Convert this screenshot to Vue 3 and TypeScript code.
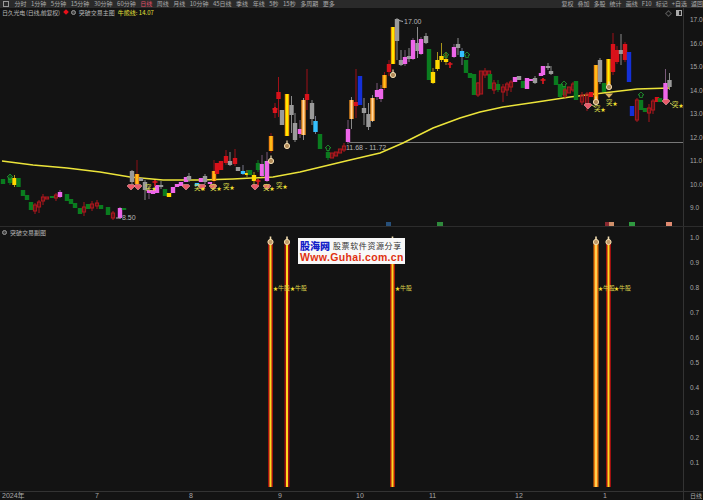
<template>
  <div class="page">
    <div class="toolbar">
      <div class="tool-group">
        <span class="tool-box"></span>
        <span v-for="t in periods" :key="t" class="tool" :class="{ active: t === '日线' }">{{ t }}</span>
      </div>
      <div class="tool-group right">
        <span v-for="t in actions" :key="t" class="tool">{{ t }}</span>
      </div>
    </div>

    <div class="panel main-panel">
      <div class="chart">
        <div class="legend">
          <span class="legend-name">日久光电 (日线,前复权)</span>
          <i class="red-diamond"></i>
          <i class="gray-dot"></i>
          <span>突破交易主图</span>
          <span class="yellow">牛熊线: 14.07</span>
        </div>
        <div class="corner-icons"><i class="ci-diamond"></i><i class="ci-square"></i></div>
        <svg class="plot" width="683" height="218" viewBox="0 8 683 218">
          <line x1="349" y1="142.5" x2="683" y2="142.5" stroke="#777" />
          <polyline :points="maLine" fill="none" stroke="#ece43a" stroke-width="1.5" />

          <g v-for="(c, i) in candleViews" :key="i">
            <line :x1="c.x" :x2="c.x" :y1="c.wt" :y2="c.wb" :stroke="c.wick" />
            <rect :x="c.x - c.w / 2" :y="c.t" :width="c.w" :height="c.h" :fill="c.fill" :stroke="c.stroke" stroke-width="1" />
            <rect v-if="c.inner" :x="c.x - 0.9" :y="c.t" width="1.8" :height="c.h" :fill="c.inner" />
          </g>

          <g v-for="g in gems" :key="'g' + g[0]">
            <path :d="`M${g[0] - 4} ${g[1] - 1}l1.5 -1.5h5l1.5 1.5l-4 4z`" fill="#e85a6a" stroke="#ffb4b4" stroke-width=".5" />
          </g>
          <g v-for="b in bulbs" :key="'b' + b[0]">
            <circle :cx="b[0]" :cy="b[1]" r="2.6" fill="#b08a58" stroke="#f2dcb0" stroke-width="1" />
            <path :d="`M${b[0]} ${b[1] - 5.5}v3`" stroke="#f2dcb0" stroke-width="1.2" />
          </g>
          <g v-for="u in ups" :key="'u' + u[0]">
            <path :d="`M${u[0]} ${u[1] - 3}l3 3h-1.6v2.5h-2.8v-2.5h-1.6z`" fill="none" stroke="#1f9a30" stroke-width=".8" />
          </g>
          <g v-for="r in crosses" :key="'r' + r[0]">
            <path :d="`M${r[0]} ${r[1] - 3}v6M${r[0] - 2.5} ${r[1] - 1}h5`" stroke="#e01820" stroke-width="1.6" />
          </g>
          <path d="M605 93.5h8l-4 4.5z" fill="#d8b060" />
          <path d="M592 105l3 2M670 103l3 2" stroke="#c8c860" fill="none" />

          <g v-for="s in breaks" :key="'s' + s[0]">
            <text class="cn-mark" :x="s[0]" :y="s[1]">突</text>
            <text class="star" :x="s[0] + 6.5" :y="s[1]">★</text>
          </g>

          <text class="price" x="404" y="23.5">17.00</text>
          <path d="M399 20.5l4 1" stroke="#aaa" fill="none" />
          <text class="price" x="122" y="219.5">8.50</text>
          <path d="M116 218h5" stroke="#aaa" />
          <text class="price" x="346" y="150">11.68 - 11.72</text>

          <rect x="386" y="222" width="5" height="4" fill="#27507a" />
          <rect x="437" y="222" width="6" height="4" fill="#2f8a3c" />
          <rect x="605" y="222" width="4" height="4" fill="#8a2830" />
          <rect x="609" y="222" width="5" height="4" fill="#d0906a" />
          <rect x="629" y="222" width="6" height="4" fill="#2f9a40" />
          <rect x="666" y="222" width="6" height="4" fill="#e08a70" />
        </svg>
      </div>
      <div class="axis">
        <span v-for="t in mainTicks" :key="t" class="tick">{{ t }}</span>
      </div>
    </div>

    <div class="panel sub-panel">
      <div class="chart">
        <div class="legend sub-legend">
          <i class="gray-dot"></i>
          <span>突破交易副图</span>
        </div>
        <svg class="plot" width="683" height="264" viewBox="0 227 683 264">
          <g v-for="b in signals" :key="b.x">
            <rect :x="b.x - 2.5" y="241" width="5" height="246" :fill="b.edge" />
            <rect :x="b.x - 1" y="241" width="2" height="246" :fill="b.core" />
            <circle :cx="b.x" cy="242" r="2.6" fill="#c09a68" stroke="#f2dcb0" stroke-width="1" />
            <path :d="`M${b.x} 236.5v3.5`" stroke="#f2dcb0" stroke-width="1.6" />
          </g>
          <g v-for="x in bullX" :key="x">
            <text class="star" :x="x" y="289.5">★</text>
            <text class="bull" :x="x + 5" y="289.5">牛股</text>
          </g>
        </svg>
        <div class="stamp">
          <div class="stamp-top">
            <b>股海网</b>
            <span>股票软件资源分享</span>
          </div>
          <div class="stamp-url">Www.Guhai.com.cn</div>
        </div>
      </div>
      <div class="axis sub-axis">
        <span v-for="t in subTicks" :key="t" class="tick">{{ t }}</span>
      </div>
    </div>

    <div class="dates">
      <div class="date-track">
        <span v-for="d in dates" :key="d.t" class="date" :style="{ left: d.x + 'px' }">{{ d.t }}</span>
      </div>
      <span class="date-kind">日线</span>
    </div>
  </div>
</template>

<script setup lang="ts">
import { computed } from 'vue'

type Kind = 'g' | 'r' | 'h' | 'm' | 's' | 'y' | 'o' | 'c' | 'b' | 'a' | 'f'
type Candle = [number, number, number, Kind, number?, number?]

const periods = ['分时', '1分钟', '5分钟', '15分钟', '30分钟', '60分钟', '日线', '周线', '月线', '10分钟', '45日线', '季线', '年线', '5秒', '15秒', '多周期', '更多']
const actions = ['复权', '叠加', '多股', '统计', '画线', 'F10', '标记', '+自选', '返回']
const mainTicks = ['17.0', '16.0', '15.0', '14.0', '13.0', '12.0', '11.0', '10.0', '9.0']
const subTicks = ['1.0', '0.9', '0.8', '0.7', '0.6', '0.5', '0.4', '0.3', '0.2', '0.1']
const dates = [
  { t: '2024年', x: 2 }, { t: '7', x: 95 }, { t: '8', x: 189 }, { t: '9', x: 278 },
  { t: '10', x: 356 }, { t: '11', x: 429 }, { t: '12', x: 515 }, { t: '1', x: 603 },
]

// x, body top, body bottom, kind, wick top, wick bottom
const candles: Candle[] = [
  [3, 179, 184, 'g'], [10, 178, 183, 'g', 174, 185], [14.5, 178, 185, 'y', 175, 187], [18.5, 178, 187, 'g'],
  [23, 190, 196, 'g'], [27, 195, 200, 'g'], [31, 202, 210, 'g'], [35, 205, 211, 'h', 203, 214],
  [39, 202, 207, 'h', 200, 213], [43, 197, 201, 'h', 194, 205], [47, 197, 199, 'h'], [52, 196, 198, 'g'],
  [56, 195, 198, 'h', 193, 201], [60, 192, 197, 'm', 190, 198], [67, 194, 201, 'g'], [71, 199, 204, 'g'],
  [75, 203, 208, 'g'], [80, 208, 214, 'g'], [84, 207, 212, 'h', 202, 216], [88, 204, 209, 'g'],
  [92, 204, 208, 'h', 201, 211], [97, 203, 206, 'h', 200, 209], [101, 205, 209, 'g'], [108, 207, 215, 'g'],
  [113, 213, 218, 'h', 211, 220], [120, 208, 218, 'm', 207, 219], [124, 208, 210, 'g'],
  [132, 171, 182, 's', 170, 184], [137, 174, 184, 'o', 160, 188], [141, 178, 181, 's'], [145, 182, 190, 's', 180, 200],
  [149, 190, 193, 'm', 186, 199], [153, 190, 194, 'm'], [157, 185, 193, 'm'], [161, 185, 187, 's', 181, 189],
  [165, 189, 196, 'g'], [169, 193, 197, 'y'], [173, 187, 193, 'm'], [177, 184, 187, 'm'], [181, 182, 186, 'm'],
  [186, 177, 182, 'm'], [189, 176, 180, 's', 173, 182], [197, 183, 186, 'b'], [201, 178, 182, 'm'], [205, 176, 182, 's', 174, 184],
  [210, 182, 184, 'm'], [214, 171, 181, 'o', 160, 184], [217, 163, 174, 'r'], [221, 161, 170, 'r'], [226, 156, 163, 'r', 150, 165],
  [230, 161, 165, 's', 152, 166], [235, 158, 164, 'r', 149, 166], [238, 167, 171, 's'], [243, 171, 174, 'b', 165, 175],
  [247, 173, 175, 'y', 170, 177], [250, 170, 175, 'g'], [254, 175, 181, 'y', 172, 186], [258, 163, 170, 'g', 160, 172],
  [262, 164, 176, 'm', 155, 177], [266, 161, 175, 'g'], [267, 161, 181, 'm', 152, 182], [271, 136, 151, 'o', 133, 153],
  [275, 108, 113, 'r', 103, 118], [278.5, 92, 99, 'r', 77, 117], [282, 110, 125, 's'], [287, 94, 136, 'a'],
  [291.5, 105, 115, 's', 96, 133], [295, 123, 140, 's', 113, 142], [300, 129, 134, 'm', 120, 138], [303.5, 100, 135, 'c', 98, 140],
  [307, 94, 100, 'r', 69, 110], [312, 103, 119, 's', 100, 125], [315.5, 121, 132, 'b', 116, 134], [320, 134, 149, 'g'],
  [328, 152, 158, 'g', 150, 160], [332, 153, 158, 'h'], [336, 152, 156, 'h'], [340, 149, 153, 'h'], [344, 146, 150, 'h', 143, 152],
  [348, 129, 142, 'm', 120, 144], [351.5, 100, 119, 'c', 97, 129], [356, 102, 106, 'r', 69, 118], [360, 76, 105, 'f'],
  [364, 108, 113, 's', 98, 125], [368.5, 114, 127, 's', 103, 130], [372.5, 98, 121, 'c', 95, 122], [377, 90, 97, 'm', 83, 100],
  [381, 89, 99, 'm', 85, 102], [384.5, 75, 88, 'o', 72, 90], [389, 64, 72, 'r', 60, 76], [393, 27, 64, 'a'],
  [397, 19, 41, 's', 18, 60], [401, 60, 65, 's', 50, 66], [405, 57, 64, 'm', 50, 66], [409, 56, 59, 's', 48, 62],
  [413, 40, 59, 'm', 38, 60], [417.5, 43, 51, 's', 27, 58], [421, 39, 54, 'm', 37, 55], [426, 36, 43, 's', 33, 44],
  [429, 49, 80, 'g'], [433, 72, 83, 'y', 68, 84], [437.5, 60, 69, 'y', 52, 71], [441.5, 56, 60, 'y', 43, 62],
  [446, 59, 62, 'y', 52, 65], [454, 47, 57, 'm', 44, 58], [458, 44, 48, 's', 38, 55], [462, 51, 57, 'b', 48, 65],
  [466, 60, 73, 'g'], [470, 73, 78, 'g'], [474, 74, 95, 'g'], [478, 83, 95, 'h', 82, 97], [481, 71, 94, 'h'],
  [485, 71, 75, 'h', 68, 78], [489, 71, 75, 'h'], [490, 74, 89, 'g'], [498, 84, 90, 'g', 80, 92],
  [494, 83, 90, 'h', 80, 94], [503, 87, 92, 'h', 84, 102], [507, 84, 90, 'h', 82, 96], [511, 82, 87, 'h', 80, 92],
  [515, 77, 82, 'm'], [519, 76, 80, 's'], [523, 81, 88, 'g'], [527, 78, 89, 'm'], [531, 79, 81, 'm'], [535, 78, 83, 's', 76, 84],
  [541, 73, 76, 'm'], [543, 66, 75, 'm'], [548, 66, 68, 's', 63, 70], [551, 71, 74, 's', 66, 75], [556, 76, 85, 'g'],
  [560, 84, 97, 'g'], [564, 86, 95, 'g'], [565, 90, 96, 'h', 88, 98], [569, 87, 93, 'h'], [573, 84, 90, 'h', 82, 92],
  [576, 81, 100, 'g'], [582, 95, 102, 'h', 92, 105], [587, 94, 105, 'h', 92, 111], [591, 92, 97, 'r'],
  [596, 65, 101, 'o'], [600, 60, 82, 's', 58, 84], [604, 83, 92, 'g'], [608.5, 59, 85, 'a'], [613, 44, 72, 'r', 33, 75],
  [617, 50, 62, 'r', 46, 64], [621, 50, 54, 's', 34, 65], [625, 44, 60, 'r', 42, 62], [629, 52, 82, 'f'],
  [632, 106, 116, 'f'], [637, 100, 120, 'h', 98, 122], [641, 100, 110, 'g'], [645, 108, 112, 'g'], [649, 108, 113, 'h', 104, 122],
  [653, 101, 110, 'h', 99, 114], [657, 97, 102, 'r'], [660, 98, 102, 'g'], [665.5, 83, 100, 'm', 69, 104], [669.5, 80, 87, 's', 73, 90],
]

const palette: Record<Kind, { fill: string; wick: string; inner?: string; stroke?: string }> = {
  g: { fill: '#0a7c1f', wick: '#0a7c1f' },
  r: { fill: '#d9111a', wick: '#a01018' },
  h: { fill: 'none', wick: '#a8161c', stroke: '#b3181e' },
  m: { fill: '#ee66ea', wick: '#7a5a7a' },
  s: { fill: '#9a9a9a', wick: '#8a8a8a' },
  y: { fill: '#ffd800', wick: '#a8941a' },
  o: { fill: '#f28a10', wick: '#8a1016', inner: '#ffc01a' },
  c: { fill: '#f09020', wick: '#888', inner: '#ffd9a0' },
  a: { fill: '#f5a000', wick: '#8a1016', inner: '#fff000' },
  b: { fill: '#35c0ff', wick: '#778' },
  f: { fill: '#1430d8', wick: '#778' },
}

const candleViews = computed(() =>
  candles.map(([x, t, b, k, wt, wb]) => {
    const p = palette[k]
    return {
      x,
      t,
      h: b - t,
      w: k === 'h' ? 3.2 : 4.4,
      wt: wt ?? t,
      wb: wb ?? b,
      fill: p.fill,
      wick: p.wick,
      inner: p.inner,
      stroke: p.stroke ?? 'none',
    }
  }),
)

const maLine = [
  [2, 161], [33, 165], [67, 168], [100, 172], [130, 177], [163, 180], [200, 180], [233, 179], [273, 177], [300, 172],
  [350, 160], [380, 153], [403, 143], [433, 128], [460, 118], [480, 112], [503, 107], [537, 102], [570, 97], [603, 93], [637, 89], [670, 88],
].map((p) => p.join(',')).join(' ')

const gems = [[131, 187], [138, 187], [186, 187], [202, 187], [213, 187], [255, 187], [267, 187], [588, 106], [666, 102]]
const bulbs = [[271, 161], [287, 146], [393, 75], [609, 87], [596, 102]]
const ups = [[10, 177], [328, 148], [446, 55], [467, 55], [564, 84], [641, 95]]
const crosses = [[450, 65], [258, 182], [543, 81], [275, 110], [155, 183]]
const breaks = [[145, 190], [194, 190], [210, 190], [223, 189], [263, 190], [276, 188], [594, 111], [606, 105], [672, 107]]

const signals = [
  { x: 270.5, edge: '#a01010', core: '#ffd820' },
  { x: 287, edge: '#a01010', core: '#ffd820' },
  { x: 392.5, edge: '#b01808', core: '#ffd820' },
  { x: 596, edge: '#f07a10', core: '#ffd050' },
  { x: 608.5, edge: '#a01010', core: '#ffd820' },
]
const bullX = [273, 290, 395, 598, 614]
</script>

<style>
html,
body {
  margin: 0;
  background: #131313;
}
</style>

<style scoped>
.page {
  width: 703px;
  height: 500px;
  display: flex;
  flex-direction: column;
  overflow: hidden;
  background: #131313;
  color: #b8b8b8;
  font-family: "Noto Sans CJK SC", "Liberation Sans", sans-serif;
  font-size: 6px;
}

.toolbar {
  height: 8px;
  flex: none;
  display: flex;
  justify-content: space-between;
  overflow: hidden;
  background: #2a2a2a;
  line-height: 8px;
}

.tool-group {
  display: flex;
  align-items: center;
  gap: 4.5px;
  padding-left: 3px;
}

.tool-group.right {
  padding-left: 0;
  gap: 4px;
}

.tool {
  color: #aaa;
  white-space: nowrap;
}

.tool.active {
  color: #e0506a;
}

.tool-box {
  width: 4px;
  height: 4px;
  margin-right: 1px;
  border: 1px solid #999;
}

.panel {
  display: flex;
  flex: none;
}

.main-panel {
  height: 218px;
}

.sub-panel {
  height: 264px;
  border-top: 1px solid #2c2c2c;
}

.chart {
  position: relative;
  width: 683px;
  flex: none;
}

.plot {
  display: block;
}

.legend {
  position: absolute;
  top: 0;
  left: 2px;
  display: flex;
  align-items: center;
  gap: 3px;
  height: 8px;
  white-space: nowrap;
  color: #b5b5b5;
}

.legend-name {
  letter-spacing: -0.25px;
  margin-right: 1px;
}

.sub-legend {
  top: 1px;
  left: 2px;
  gap: 3px;
}

.yellow {
  color: #e6e23a;
}

.red-diamond {
  width: 4px;
  height: 4px;
  background: #e8101a;
  transform: rotate(45deg);
}

.gray-dot {
  width: 3px;
  height: 3px;
  border: 1px solid #999;
  background: #444;
  border-radius: 50%;
}

.corner-icons {
  position: absolute;
  top: 2px;
  right: 0;
  display: flex;
  align-items: center;
  gap: 5px;
  padding-right: 1px;
}

.ci-diamond {
  width: 3px;
  height: 3px;
  border: 1px solid #555;
  transform: rotate(45deg);
}

.ci-square {
  width: 4px;
  height: 4px;
  border: 1px solid #aaa;
  background: linear-gradient(90deg, #aaa 50%, #222 50%);
}

.axis {
  flex: 1;
  display: flex;
  flex-direction: column;
  gap: 14px;
  padding: 7px 0 0 6px;
  border-left: 1px solid #333;
  box-sizing: border-box;
  font-family: "Liberation Sans", sans-serif;
  color: #a8a8a8;
}

.tick {
  height: 9.5px;
  line-height: 9.5px;
  font-size: 6.5px;
  white-space: nowrap;
}

.sub-axis {
  gap: 15.5px;
  padding-top: 6px;
}

.cn-mark {
  font-size: 6.5px;
  fill: #d8d84a;
}

.star {
  font-size: 5px;
  fill: #f5e030;
}

.bull {
  font-size: 6px;
  fill: #d8d04a;
}

.price {
  font-size: 7px;
  fill: #b8b8b8;
  font-family: "Liberation Sans", sans-serif;
}

.stamp {
  position: absolute;
  left: 298px;
  top: 11px;
  width: 107px;
  height: 26px;
  box-sizing: border-box;
  padding: 1px 1px 0 2px;
  background: #f8f8f8;
  overflow: hidden;
}

.stamp-top {
  display: flex;
  align-items: center;
  gap: 3px;
  height: 13px;
  line-height: 12px;
  white-space: nowrap;
}

.stamp-top b {
  font-size: 10px;
  line-height: 12px;
  font-weight: 900;
  color: #1420c8;
}

.stamp-top span {
  font-size: 8px;
  line-height: 12px;
  font-family: "Noto Sans CJK SC", serif;
  color: #333;
  letter-spacing: 0.6px;
}

.stamp-url {
  font-family: "Liberation Sans", sans-serif;
  font-weight: 700;
  font-size: 10.5px;
  line-height: 11px;
  letter-spacing: 0.35px;
  color: #e03010;
  white-space: nowrap;
}

.dates {
  flex: 1;
  display: flex;
  border-top: 1px solid #333;
  font-family: "Liberation Sans", sans-serif;
  color: #a8a8a8;
  font-size: 7px;
}

.date-track {
  position: relative;
  width: 683px;
  flex: none;
  border-right: 1px solid #333;
}

.date {
  position: absolute;
  top: 0;
  line-height: 8px;
  white-space: nowrap;
  font-family: "Liberation Sans", "Noto Sans CJK SC", sans-serif;
}

.date-kind {
  padding-left: 6px;
  line-height: 8px;
  font-size: 6px;
  white-space: nowrap;
  font-family: "Noto Sans CJK SC", sans-serif;
}
</style>
